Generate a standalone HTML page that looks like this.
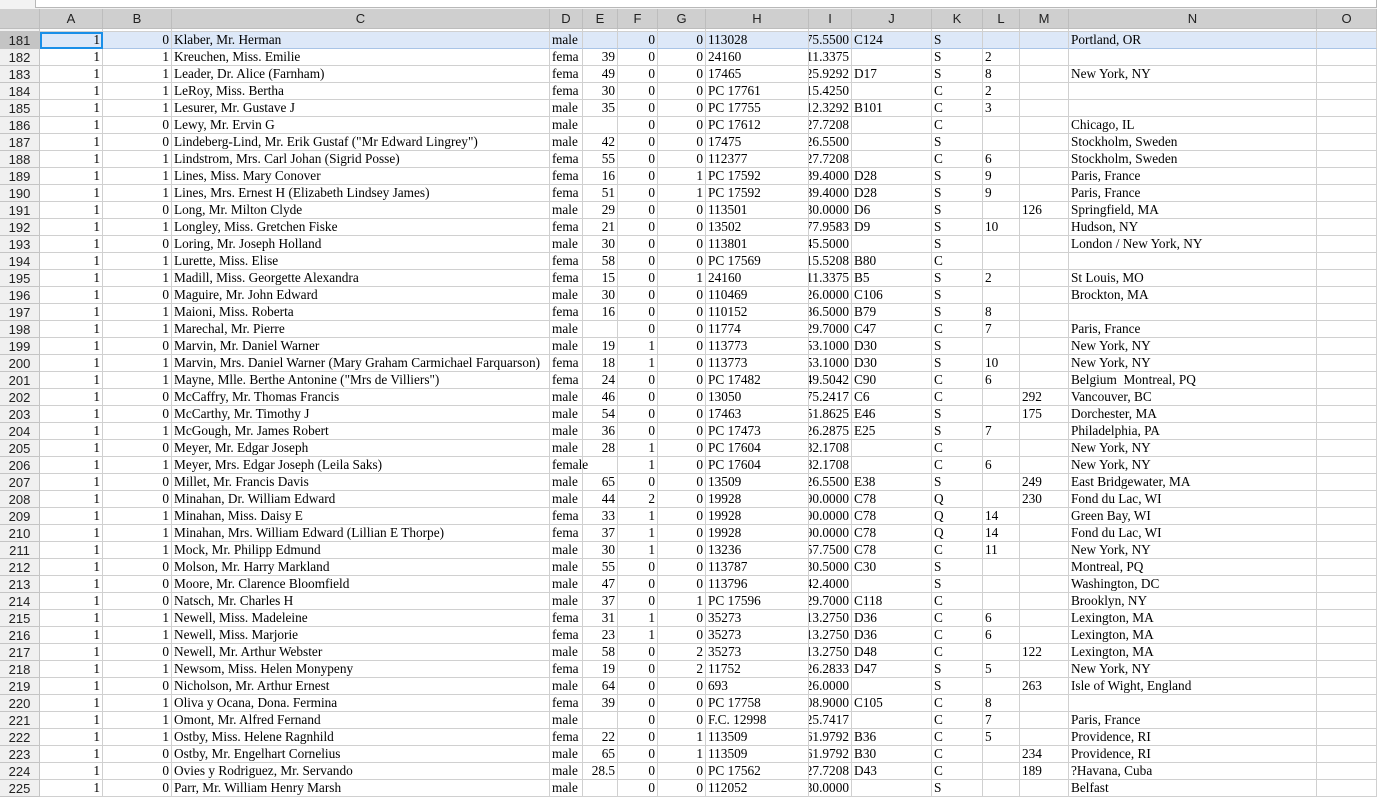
<!DOCTYPE html>
<html><head><meta charset="utf-8"><style>
body{margin:0;width:1377px;height:796px;overflow:hidden;background:#fff;position:relative}
.top{position:absolute;left:0;top:0;width:1377px;height:9px;background:#f2f2f2}
.top .box{position:absolute;left:35px;top:-2px;width:1340px;height:8px;background:#fff;border:1px solid #b8b8b8}
table{position:absolute;left:0;top:9px;border-collapse:separate;border-spacing:0;table-layout:fixed;width:1377px;font:13.3px "Liberation Serif",serif;color:#000}
td,th{box-sizing:border-box;height:17px;padding:0 2px;border-right:1px solid #d0d0d0;border-bottom:1px solid #d0d0d0;white-space:nowrap;overflow:hidden;line-height:16px;text-align:left}
th{font:13px "Liberation Sans",sans-serif;background:#f0f0f0;color:#222;text-align:center;font-weight:normal;border-color:#c4c4c4}
tr.h th{height:19px;background:#cfcfcf;border-color:#bdbdbd;line-height:19px}
tr.p td,tr.p th{height:3px;line-height:3px;font-size:0}
td:nth-child(2),td:nth-child(3),td:nth-child(6),td:nth-child(7),td:nth-child(8){text-align:right}
td:nth-child(10){direction:rtl;text-align:right;padding:0 3px 0 0}
tr.s td{background:#dde8f8;border-bottom-color:#a9c4e6}
tr.s th{background:#c4c4c4}
tr.s td.a{outline:2px solid #1a8fe8;outline-offset:-2px}
td.ov{overflow:visible}
</style></head><body>
<div class="top"><div class="box"></div></div>
<table>
<col style="width:40px"><col style="width:63px"><col style="width:69px"><col style="width:378px"><col style="width:33px"><col style="width:35px"><col style="width:40px"><col style="width:48px"><col style="width:103px"><col style="width:43px"><col style="width:80px"><col style="width:51px"><col style="width:37px"><col style="width:49px"><col style="width:248px"><col style="width:60px">
<tr class="h"><th></th><th>A</th><th>B</th><th>C</th><th>D</th><th>E</th><th>F</th><th>G</th><th>H</th><th>I</th><th>J</th><th>K</th><th>L</th><th>M</th><th>N</th><th>O</th></tr>
<tr class="p"><th></th><td></td><td></td><td></td><td></td><td></td><td></td><td></td><td></td><td></td><td></td><td></td><td></td><td></td><td></td><td></td></tr>
<tr class="s"><th>181</th><td class="a">1</td><td>0</td><td>Klaber, Mr. Herman</td><td>male</td><td></td><td>0</td><td>0</td><td>113028</td><td>75.5500</td><td>C124</td><td>S</td><td></td><td></td><td>Portland, OR</td><td></td></tr>
<tr><th>182</th><td>1</td><td>1</td><td>Kreuchen, Miss. Emilie</td><td>fema</td><td>39</td><td>0</td><td>0</td><td>24160</td><td>11.3375</td><td></td><td>S</td><td>2</td><td></td><td></td><td></td></tr>
<tr><th>183</th><td>1</td><td>1</td><td>Leader, Dr. Alice (Farnham)</td><td>fema</td><td>49</td><td>0</td><td>0</td><td>17465</td><td>25.9292</td><td>D17</td><td>S</td><td>8</td><td></td><td>New York, NY</td><td></td></tr>
<tr><th>184</th><td>1</td><td>1</td><td>LeRoy, Miss. Bertha</td><td>fema</td><td>30</td><td>0</td><td>0</td><td>PC 17761</td><td>15.4250</td><td></td><td>C</td><td>2</td><td></td><td></td><td></td></tr>
<tr><th>185</th><td>1</td><td>1</td><td>Lesurer, Mr. Gustave J</td><td>male</td><td>35</td><td>0</td><td>0</td><td>PC 17755</td><td>12.3292</td><td>B101</td><td>C</td><td>3</td><td></td><td></td><td></td></tr>
<tr><th>186</th><td>1</td><td>0</td><td>Lewy, Mr. Ervin G</td><td>male</td><td></td><td>0</td><td>0</td><td>PC 17612</td><td>27.7208</td><td></td><td>C</td><td></td><td></td><td>Chicago, IL</td><td></td></tr>
<tr><th>187</th><td>1</td><td>0</td><td>Lindeberg-Lind, Mr. Erik Gustaf ("Mr Edward Lingrey")</td><td>male</td><td>42</td><td>0</td><td>0</td><td>17475</td><td>26.5500</td><td></td><td>S</td><td></td><td></td><td>Stockholm, Sweden</td><td></td></tr>
<tr><th>188</th><td>1</td><td>1</td><td>Lindstrom, Mrs. Carl Johan (Sigrid Posse)</td><td>fema</td><td>55</td><td>0</td><td>0</td><td>112377</td><td>27.7208</td><td></td><td>C</td><td>6</td><td></td><td>Stockholm, Sweden</td><td></td></tr>
<tr><th>189</th><td>1</td><td>1</td><td>Lines, Miss. Mary Conover</td><td>fema</td><td>16</td><td>0</td><td>1</td><td>PC 17592</td><td>39.4000</td><td>D28</td><td>S</td><td>9</td><td></td><td>Paris, France</td><td></td></tr>
<tr><th>190</th><td>1</td><td>1</td><td>Lines, Mrs. Ernest H (Elizabeth Lindsey James)</td><td>fema</td><td>51</td><td>0</td><td>1</td><td>PC 17592</td><td>39.4000</td><td>D28</td><td>S</td><td>9</td><td></td><td>Paris, France</td><td></td></tr>
<tr><th>191</th><td>1</td><td>0</td><td>Long, Mr. Milton Clyde</td><td>male</td><td>29</td><td>0</td><td>0</td><td>113501</td><td>30.0000</td><td>D6</td><td>S</td><td></td><td>126</td><td>Springfield, MA</td><td></td></tr>
<tr><th>192</th><td>1</td><td>1</td><td>Longley, Miss. Gretchen Fiske</td><td>fema</td><td>21</td><td>0</td><td>0</td><td>13502</td><td>77.9583</td><td>D9</td><td>S</td><td>10</td><td></td><td>Hudson, NY</td><td></td></tr>
<tr><th>193</th><td>1</td><td>0</td><td>Loring, Mr. Joseph Holland</td><td>male</td><td>30</td><td>0</td><td>0</td><td>113801</td><td>45.5000</td><td></td><td>S</td><td></td><td></td><td>London / New York, NY</td><td></td></tr>
<tr><th>194</th><td>1</td><td>1</td><td>Lurette, Miss. Elise</td><td>fema</td><td>58</td><td>0</td><td>0</td><td>PC 17569</td><td>15.5208</td><td>B80</td><td>C</td><td></td><td></td><td></td><td></td></tr>
<tr><th>195</th><td>1</td><td>1</td><td>Madill, Miss. Georgette Alexandra</td><td>fema</td><td>15</td><td>0</td><td>1</td><td>24160</td><td>11.3375</td><td>B5</td><td>S</td><td>2</td><td></td><td>St Louis, MO</td><td></td></tr>
<tr><th>196</th><td>1</td><td>0</td><td>Maguire, Mr. John Edward</td><td>male</td><td>30</td><td>0</td><td>0</td><td>110469</td><td>26.0000</td><td>C106</td><td>S</td><td></td><td></td><td>Brockton, MA</td><td></td></tr>
<tr><th>197</th><td>1</td><td>1</td><td>Maioni, Miss. Roberta</td><td>fema</td><td>16</td><td>0</td><td>0</td><td>110152</td><td>86.5000</td><td>B79</td><td>S</td><td>8</td><td></td><td></td><td></td></tr>
<tr><th>198</th><td>1</td><td>1</td><td>Marechal, Mr. Pierre</td><td>male</td><td></td><td>0</td><td>0</td><td>11774</td><td>29.7000</td><td>C47</td><td>C</td><td>7</td><td></td><td>Paris, France</td><td></td></tr>
<tr><th>199</th><td>1</td><td>0</td><td>Marvin, Mr. Daniel Warner</td><td>male</td><td>19</td><td>1</td><td>0</td><td>113773</td><td>53.1000</td><td>D30</td><td>S</td><td></td><td></td><td>New York, NY</td><td></td></tr>
<tr><th>200</th><td>1</td><td>1</td><td>Marvin, Mrs. Daniel Warner (Mary Graham Carmichael Farquarson)</td><td>fema</td><td>18</td><td>1</td><td>0</td><td>113773</td><td>53.1000</td><td>D30</td><td>S</td><td>10</td><td></td><td>New York, NY</td><td></td></tr>
<tr><th>201</th><td>1</td><td>1</td><td>Mayne, Mlle. Berthe Antonine ("Mrs de Villiers")</td><td>fema</td><td>24</td><td>0</td><td>0</td><td>PC 17482</td><td>49.5042</td><td>C90</td><td>C</td><td>6</td><td></td><td>Belgium&nbsp; Montreal, PQ</td><td></td></tr>
<tr><th>202</th><td>1</td><td>0</td><td>McCaffry, Mr. Thomas Francis</td><td>male</td><td>46</td><td>0</td><td>0</td><td>13050</td><td>75.2417</td><td>C6</td><td>C</td><td></td><td>292</td><td>Vancouver, BC</td><td></td></tr>
<tr><th>203</th><td>1</td><td>0</td><td>McCarthy, Mr. Timothy J</td><td>male</td><td>54</td><td>0</td><td>0</td><td>17463</td><td>51.8625</td><td>E46</td><td>S</td><td></td><td>175</td><td>Dorchester, MA</td><td></td></tr>
<tr><th>204</th><td>1</td><td>1</td><td>McGough, Mr. James Robert</td><td>male</td><td>36</td><td>0</td><td>0</td><td>PC 17473</td><td>26.2875</td><td>E25</td><td>S</td><td>7</td><td></td><td>Philadelphia, PA</td><td></td></tr>
<tr><th>205</th><td>1</td><td>0</td><td>Meyer, Mr. Edgar Joseph</td><td>male</td><td>28</td><td>1</td><td>0</td><td>PC 17604</td><td>82.1708</td><td></td><td>C</td><td></td><td></td><td>New York, NY</td><td></td></tr>
<tr><th>206</th><td>1</td><td>1</td><td>Meyer, Mrs. Edgar Joseph (Leila Saks)</td><td class="ov">female</td><td></td><td>1</td><td>0</td><td>PC 17604</td><td>82.1708</td><td></td><td>C</td><td>6</td><td></td><td>New York, NY</td><td></td></tr>
<tr><th>207</th><td>1</td><td>0</td><td>Millet, Mr. Francis Davis</td><td>male</td><td>65</td><td>0</td><td>0</td><td>13509</td><td>26.5500</td><td>E38</td><td>S</td><td></td><td>249</td><td>East Bridgewater, MA</td><td></td></tr>
<tr><th>208</th><td>1</td><td>0</td><td>Minahan, Dr. William Edward</td><td>male</td><td>44</td><td>2</td><td>0</td><td>19928</td><td>90.0000</td><td>C78</td><td>Q</td><td></td><td>230</td><td>Fond du Lac, WI</td><td></td></tr>
<tr><th>209</th><td>1</td><td>1</td><td>Minahan, Miss. Daisy E</td><td>fema</td><td>33</td><td>1</td><td>0</td><td>19928</td><td>90.0000</td><td>C78</td><td>Q</td><td>14</td><td></td><td>Green Bay, WI</td><td></td></tr>
<tr><th>210</th><td>1</td><td>1</td><td>Minahan, Mrs. William Edward (Lillian E Thorpe)</td><td>fema</td><td>37</td><td>1</td><td>0</td><td>19928</td><td>90.0000</td><td>C78</td><td>Q</td><td>14</td><td></td><td>Fond du Lac, WI</td><td></td></tr>
<tr><th>211</th><td>1</td><td>1</td><td>Mock, Mr. Philipp Edmund</td><td>male</td><td>30</td><td>1</td><td>0</td><td>13236</td><td>57.7500</td><td>C78</td><td>C</td><td>11</td><td></td><td>New York, NY</td><td></td></tr>
<tr><th>212</th><td>1</td><td>0</td><td>Molson, Mr. Harry Markland</td><td>male</td><td>55</td><td>0</td><td>0</td><td>113787</td><td>30.5000</td><td>C30</td><td>S</td><td></td><td></td><td>Montreal, PQ</td><td></td></tr>
<tr><th>213</th><td>1</td><td>0</td><td>Moore, Mr. Clarence Bloomfield</td><td>male</td><td>47</td><td>0</td><td>0</td><td>113796</td><td>42.4000</td><td></td><td>S</td><td></td><td></td><td>Washington, DC</td><td></td></tr>
<tr><th>214</th><td>1</td><td>0</td><td>Natsch, Mr. Charles H</td><td>male</td><td>37</td><td>0</td><td>1</td><td>PC 17596</td><td>29.7000</td><td>C118</td><td>C</td><td></td><td></td><td>Brooklyn, NY</td><td></td></tr>
<tr><th>215</th><td>1</td><td>1</td><td>Newell, Miss. Madeleine</td><td>fema</td><td>31</td><td>1</td><td>0</td><td>35273</td><td>13.2750</td><td>D36</td><td>C</td><td>6</td><td></td><td>Lexington, MA</td><td></td></tr>
<tr><th>216</th><td>1</td><td>1</td><td>Newell, Miss. Marjorie</td><td>fema</td><td>23</td><td>1</td><td>0</td><td>35273</td><td>13.2750</td><td>D36</td><td>C</td><td>6</td><td></td><td>Lexington, MA</td><td></td></tr>
<tr><th>217</th><td>1</td><td>0</td><td>Newell, Mr. Arthur Webster</td><td>male</td><td>58</td><td>0</td><td>2</td><td>35273</td><td>13.2750</td><td>D48</td><td>C</td><td></td><td>122</td><td>Lexington, MA</td><td></td></tr>
<tr><th>218</th><td>1</td><td>1</td><td>Newsom, Miss. Helen Monypeny</td><td>fema</td><td>19</td><td>0</td><td>2</td><td>11752</td><td>26.2833</td><td>D47</td><td>S</td><td>5</td><td></td><td>New York, NY</td><td></td></tr>
<tr><th>219</th><td>1</td><td>0</td><td>Nicholson, Mr. Arthur Ernest</td><td>male</td><td>64</td><td>0</td><td>0</td><td>693</td><td>26.0000</td><td></td><td>S</td><td></td><td>263</td><td>Isle of Wight, England</td><td></td></tr>
<tr><th>220</th><td>1</td><td>1</td><td>Oliva y Ocana, Dona. Fermina</td><td>fema</td><td>39</td><td>0</td><td>0</td><td>PC 17758</td><td>08.9000</td><td>C105</td><td>C</td><td>8</td><td></td><td></td><td></td></tr>
<tr><th>221</th><td>1</td><td>1</td><td>Omont, Mr. Alfred Fernand</td><td>male</td><td></td><td>0</td><td>0</td><td>F.C. 12998</td><td>25.7417</td><td></td><td>C</td><td>7</td><td></td><td>Paris, France</td><td></td></tr>
<tr><th>222</th><td>1</td><td>1</td><td>Ostby, Miss. Helene Ragnhild</td><td>fema</td><td>22</td><td>0</td><td>1</td><td>113509</td><td>61.9792</td><td>B36</td><td>C</td><td>5</td><td></td><td>Providence, RI</td><td></td></tr>
<tr><th>223</th><td>1</td><td>0</td><td>Ostby, Mr. Engelhart Cornelius</td><td>male</td><td>65</td><td>0</td><td>1</td><td>113509</td><td>61.9792</td><td>B30</td><td>C</td><td></td><td>234</td><td>Providence, RI</td><td></td></tr>
<tr><th>224</th><td>1</td><td>0</td><td>Ovies y Rodriguez, Mr. Servando</td><td>male</td><td>28.5</td><td>0</td><td>0</td><td>PC 17562</td><td>27.7208</td><td>D43</td><td>C</td><td></td><td>189</td><td>?Havana, Cuba</td><td></td></tr>
<tr><th>225</th><td>1</td><td>0</td><td>Parr, Mr. William Henry Marsh</td><td>male</td><td></td><td>0</td><td>0</td><td>112052</td><td>30.0000</td><td></td><td>S</td><td></td><td></td><td>Belfast</td><td></td></tr>
</table>
</body></html>
